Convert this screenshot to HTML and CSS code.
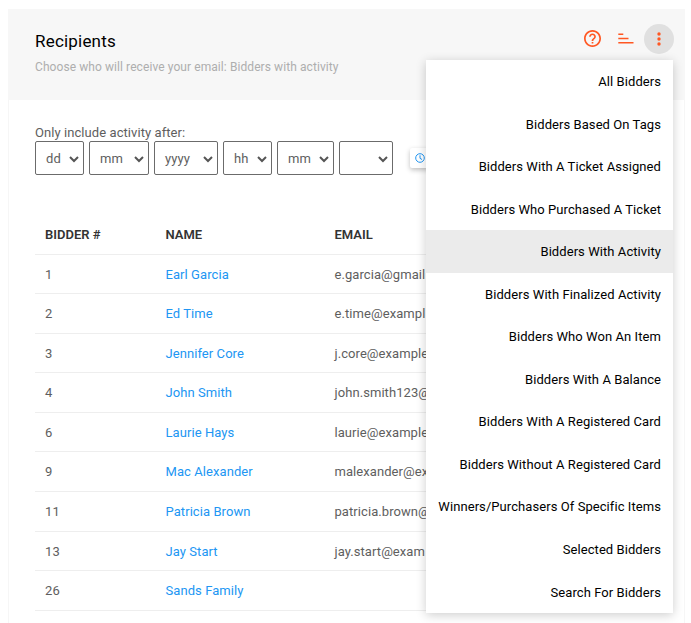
FILE: index.html
```html
<!DOCTYPE html>
<html lang="en">
<head>
<meta charset="utf-8">
<title>Recipients</title>
<link rel="stylesheet" href="styles.css">
</head>
<body>
<section class="card">
  <header class="card-header">
    <div class="heading">
      <h2>Recipients</h2>
      <small>Choose who will receive your email: Bidders with activity</small>
    </div>
    <div class="actions">
      <span class="action help"><svg width="17" height="17" viewBox="2 2 20 20" fill="#ff5722"><path d="M11 18h2v-2h-2v2zm1-16C6.480 2 2 6.480 2 12s4.480 10 10 10 10-4.480 10-10S17.520 2 12 2zm0 18c-4.410 0-8-3.590-8-8s3.590-8 8-8 8 3.590 8 8-3.590 8-8 8zm0-14c-2.210 0-4 1.790-4 4h2c0-1.100.9-2 2-2s2 .9 2 2c0 2-3 1.750-3 5h2c0-2.250 3-2.500 3-5 0-2.210-1.790-4-4-4z"/></svg></span>
      <span class="action"><svg width="16" height="12" viewBox="0 0 16 12" fill="none" stroke="#ff5722" stroke-width="1.600"><path d="M.3 1.300h5M.3 5.500h10.200M.3 9.800h15.200"/></svg></span>
      <div class="action active">
        <svg width="4" height="14" viewBox="0 0 4 14" fill="#ff5722"><circle cx="2" cy="2" r="1.700"/><circle cx="2" cy="7" r="1.700"/><circle cx="2" cy="12" r="1.700"/></svg>
        <ul class="menu">
          <li>All Bidders</li>
          <li>Bidders Based On Tags</li>
          <li>Bidders With A Ticket Assigned</li>
          <li>Bidders Who Purchased A Ticket</li>
          <li class="selected">Bidders With Activity</li>
          <li>Bidders With Finalized Activity</li>
          <li>Bidders Who Won An Item</li>
          <li>Bidders With A Balance</li>
          <li>Bidders With A Registered Card</li>
          <li>Bidders Without A Registered Card</li>
          <li>Winners/Purchasers Of Specific Items</li>
          <li>Selected Bidders</li>
          <li>Search For Bidders</li>
        </ul>
      </div>
    </div>
  </header>
  <div class="card-body">
    <div class="filter-label">Only include activity after:</div>
    <div class="filters">
      <div class="select day">dd<svg class="chevron" viewBox="0 0 10 7"><path d="M1 1l4 4 4-4"/></svg></div>
      <div class="select month">mm<svg class="chevron" viewBox="0 0 10 7"><path d="M1 1l4 4 4-4"/></svg></div>
      <div class="select year">yyyy<svg class="chevron" viewBox="0 0 10 7"><path d="M1 1l4 4 4-4"/></svg></div>
      <div class="select hour">hh<svg class="chevron" viewBox="0 0 10 7"><path d="M1 1l4 4 4-4"/></svg></div>
      <div class="select minute">mm<svg class="chevron" viewBox="0 0 10 7"><path d="M1 1l4 4 4-4"/></svg></div>
      <div class="select period"><svg class="chevron" viewBox="0 0 10 7"><path d="M1 1l4 4 4-4"/></svg></div>
      <div class="now"><svg width="10" height="10" viewBox="0 0 10 10" fill="none" stroke="#2196f3"><circle cx="5" cy="5" r="4.300"/><path d="M5 2.300v3l2 1.200"/></svg></div>
    </div>
    <table>
      <thead><tr><th class="c1">Bidder #</th><th class="c2">Name</th><th>Email</th></tr></thead>
      <tbody>
        <tr><td>1</td><td><a>Earl Garcia</a></td><td>e.garcia@gmail</td></tr>
        <tr><td>2</td><td><a>Ed Time</a></td><td>e.time@exampl</td></tr>
        <tr><td>3</td><td><a>Jennifer Core</a></td><td>j.core@example</td></tr>
        <tr><td>4</td><td><a>John Smith</a></td><td>john.smith123@</td></tr>
        <tr><td>6</td><td><a>Laurie Hays</a></td><td>laurie@example</td></tr>
        <tr><td>9</td><td><a>Mac Alexander</a></td><td>malexander@ex</td></tr>
        <tr><td>11</td><td><a>Patricia Brown</a></td><td>patricia.brown@</td></tr>
        <tr><td>13</td><td><a>Jay Start</a></td><td>jay.start@exam</td></tr>
        <tr><td>26</td><td><a>Sands Family</a></td><td></td></tr>
      </tbody>
    </table>
  </div>
</section>
</body>
</html>
```
FILE: styles.css
```css
* { box-sizing: border-box; }
html, body { height: 100%; overflow: hidden; }
body {
  margin: 0;
  padding: 9px 6px 0 8px;
  background: #fff;
  color: #5e5e5e;
  font: 13px/18.57px Roboto, sans-serif;
  letter-spacing: .07px;
}
.card {
  height: 640px;
  background: #fff;
  border: 1px solid #f6f6f6;
  border-top: 0;
}
.card-header {
  display: flex;
  justify-content: space-between;
  height: 91px;
  margin: 0 -1px;
  padding: 22px 11px 0 27px;
  background: #f7f7f7;
}
h2 {
  margin: 0;
  color: #000;
  font-size: 17px;
  font-weight: 400;
  line-height: 20px;
  letter-spacing: .2px;
}
small {
  display: block;
  margin-top: 7px;
  color: #aeaeae;
  font-size: 12px;
  line-height: 18px;
  letter-spacing: .08px;
}
.actions {
  display: flex;
  gap: 3px;
  margin-top: -7px;
}
.action {
  display: flex;
  align-items: center;
  justify-content: center;
  width: 30px;
  height: 30px;
  border-radius: 50%;
}
.help { padding: 0 1px 1px 0; }
.active { position: relative; background: #e0e0e0; }
.menu {
  position: absolute;
  top: 36px;
  right: 1px;
  z-index: 2;
  width: 247px;
  margin: 0;
  padding: 0;
  background: #fff;
  box-shadow: 0 2px 10px rgba(0, 0, 0, .2);
  list-style: none;
}
.menu li {
  height: 42.56px;
  padding-right: 12px;
  color: #000;
  line-height: 43px;
  text-align: right;
  white-space: nowrap;
}
.menu .selected { background: #ebebeb; }
.card-body { padding: 24px 26px; }
.filter-label { height: 17px; }
.filters { display: flex; align-items: center; gap: 5px; }
.select {
  display: flex;
  align-items: center;
  justify-content: space-between;
  height: 34px;
  padding: 2px 4px 0 10px;
  border: 1px solid #6b6b6b;
  border-radius: 2px;
}
.chevron {
  width: 10px;
  height: 7px;
  margin-left: auto;
  fill: none;
  stroke: #555;
  stroke-width: 2;
}
.day, .hour { width: 49px; }
.month { width: 60px; }
.year { width: 64px; }
.minute { width: 57px; }
.period { width: 54px; }
.now {
  display: flex;
  align-items: center;
  width: 50px;
  height: 20px;
  margin-left: 12px;
  padding-left: 5px;
  border-radius: 2px;
  box-shadow: 0 2px 5px rgba(0, 0, 0, .25);
}
table {
  width: 100%;
  margin-top: 40px;
  border-collapse: separate;
  border-spacing: 0;
  table-layout: fixed;
}
th, td {
  height: 39.57px;
  padding: 2px 10px 0;
  border-bottom: 1px solid #eee;
  text-align: left;
}
th {
  color: #333;
  font-weight: 600;
  letter-spacing: 0;
  text-transform: uppercase;
}
.c1 { width: 120.5px; }
.c2 { width: 169px; }
a { color: #2196f3; }
```
